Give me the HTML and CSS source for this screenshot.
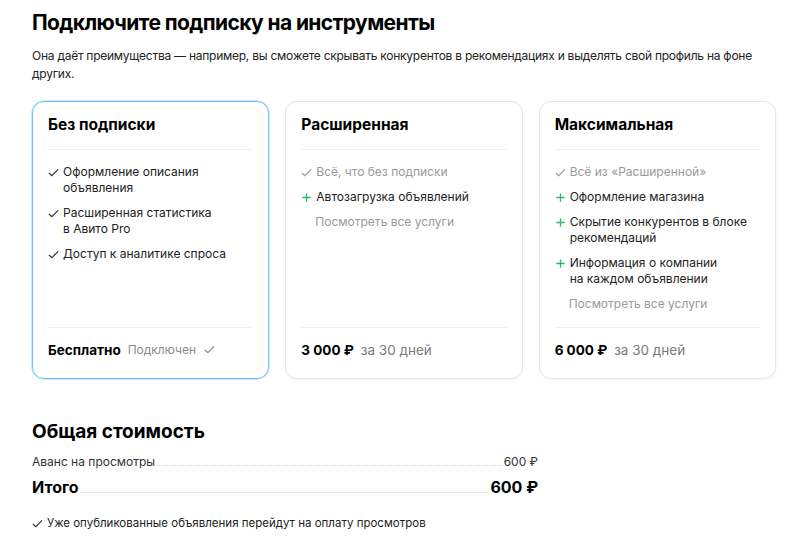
FILE: index.html
```html
<!DOCTYPE html>
<html lang="ru">
<head>
<meta charset="utf-8">
<title>Подписка</title>
<link rel="stylesheet" href="styles.css">
</head>
<body>
<main class="page">
  <h1 class="title">Подключите подписку на инструменты</h1>
  <p class="lead">Она даёт преимущества — например, вы сможете скрывать конкурентов в рекомендациях и выделять свой профиль на фоне других.</p>

  <section class="plans">
    <article class="card card-active">
      <h2 class="card-title">Без подписки</h2>
      <ul class="features">
        <li class="feat"><svg class="ic" viewBox="0 0 12 12"><path d="M1 6.5 L4.2 9.5 L11 2.5" fill="none" stroke="#333" stroke-width="1.3"/></svg><span>Оформление описания<br>объявления</span></li>
        <li class="feat"><svg class="ic" viewBox="0 0 12 12"><path d="M1 6.5 L4.2 9.5 L11 2.5" fill="none" stroke="#333" stroke-width="1.3"/></svg><span>Расширенная статистика<br>в Авито Pro</span></li>
        <li class="feat"><svg class="ic" viewBox="0 0 12 12"><path d="M1 6.5 L4.2 9.5 L11 2.5" fill="none" stroke="#333" stroke-width="1.3"/></svg><span>Доступ к аналитике спроса</span></li>
      </ul>
      <div class="card-foot">
        <span class="price">Бесплатно</span>
        <span class="status">Подключен</span>
        <svg class="ic-status" viewBox="0 0 12 12"><path d="M1 6.5 L4.2 9.5 L11 2.5" fill="none" stroke="#8a8a8a" stroke-width="1.3"/></svg>
      </div>
    </article>

    <article class="card">
      <h2 class="card-title">Расширенная</h2>
      <ul class="features">
        <li class="feat muted"><svg class="ic" viewBox="0 0 12 12"><path d="M1 6.5 L4.2 9.5 L11 2.5" fill="none" stroke="#9a9a9a" stroke-width="1.3"/></svg><span>Всё, что без подписки</span></li>
        <li class="feat"><svg class="ic" viewBox="0 0 12 12"><path d="M6 1.5 V10.5 M1.5 6 H10.5" fill="none" stroke="#2bb86a" stroke-width="1.4"/></svg><span>Автозагрузка объявлений</span></li>
        <li class="feat muted link"><span>Посмотреть все услуги</span></li>
      </ul>
      <div class="card-foot">
        <span class="price">3 000 ₽</span>
        <span class="period">за 30 дней</span>
      </div>
    </article>

    <article class="card">
      <h2 class="card-title">Максимальная</h2>
      <ul class="features">
        <li class="feat muted"><svg class="ic" viewBox="0 0 12 12"><path d="M1 6.5 L4.2 9.5 L11 2.5" fill="none" stroke="#9a9a9a" stroke-width="1.3"/></svg><span>Всё из «Расширенной»</span></li>
        <li class="feat"><svg class="ic" viewBox="0 0 12 12"><path d="M6 1.5 V10.5 M1.5 6 H10.5" fill="none" stroke="#2bb86a" stroke-width="1.4"/></svg><span>Оформление магазина</span></li>
        <li class="feat"><svg class="ic" viewBox="0 0 12 12"><path d="M6 1.5 V10.5 M1.5 6 H10.5" fill="none" stroke="#2bb86a" stroke-width="1.4"/></svg><span>Скрытие конкурентов в блоке<br>рекомендаций</span></li>
        <li class="feat"><svg class="ic" viewBox="0 0 12 12"><path d="M6 1.5 V10.5 M1.5 6 H10.5" fill="none" stroke="#2bb86a" stroke-width="1.4"/></svg><span>Информация о компании<br>на каждом объявлении</span></li>
        <li class="feat muted link"><span>Посмотреть все услуги</span></li>
      </ul>
      <div class="card-foot">
        <span class="price">6 000 ₽</span>
        <span class="period">за 30 дней</span>
      </div>
    </article>
  </section>

  <section class="total">
    <h2 class="total-title">Общая стоимость</h2>
    <div class="row">
      <span class="row-label">Аванс на просмотры</span>
      <span class="dots"></span>
      <span class="row-value">600 ₽</span>
    </div>
    <div class="row row-big">
      <span class="row-label">Итого</span>
      <span class="dots"></span>
      <span class="row-value">600 ₽</span>
    </div>
    <p class="note"><svg class="ic-note" viewBox="0 0 12 12"><path d="M1 6.5 L4.2 9.5 L11 2.5" fill="none" stroke="#333" stroke-width="1.3"/></svg>Уже опубликованные объявления перейдут на оплату просмотров</p>
  </section>
</main>
</body>
</html>
```

FILE: styles.css
```css
* { box-sizing: border-box; }
html, body { margin: 0; padding: 0; background: #fff; }
body {
  font-family: Inter, "Noto Sans", "Liberation Sans", sans-serif;
  color: #1a1a1a;
}
.page {
  width: 800px;
  padding: 9px 24px 0 32px;
}
.title {
  margin: 0;
  font-size: 21px;
  line-height: 28px;
  font-weight: 700;
  letter-spacing: -0.6px;
  color: #000;
}
.lead {
  margin: 10px 0 0;
  font-size: 12px;
  line-height: 18px;
  letter-spacing: -0.25px;
  color: #222;
  max-width: 744px;
}
.plans {
  margin-top: 18px;
  display: grid;
  grid-template-columns: repeat(3, 1fr);
  gap: 16px;
  width: 744px;
}
.card {
  border: 1px solid #e6e6e6;
  border-radius: 12px;
  padding: 12px 15px 0;
  display: flex;
  flex-direction: column;
  box-shadow: 0 1px 3px rgba(0,0,0,0.04);
}
.card-active {
  border-color: #6cc0f7;
  box-shadow: 0 0 0 0.5px #9ed6fb;
}
.card-title {
  margin: 0;
  font-size: 15.5px;
  line-height: 22px;
  font-weight: 700;
  color: #000;
  padding-bottom: 13px;
  border-bottom: 1px solid #f0f0f0;
}
.features {
  list-style: none;
  margin: 0;
  padding: 14px 0 15px;
  flex: 1;
  display: flex;
  flex-direction: column;
  gap: 9px;
  border-bottom: 1px solid #f0f0f0;
}
.feat {
  display: flex;
  align-items: flex-start;
  gap: 4px;
  font-size: 12px;
  line-height: 16px;
  color: #222;
}
.feat.muted { color: #9a9a9a; }
.feat.link { padding-left: 14px; }
.ic {
  width: 11px;
  height: 11px;
  flex: none;
  margin-top: 3px;
}
.card-foot {
  display: flex;
  align-items: center;
  padding: 11px 0 18px;
  height: 50px;
}
.price {
  font-size: 13.5px;
  font-weight: 700;
  color: #000;
  margin-right: 7px;
}
.status {
  font-size: 12px;
  color: #8a8a8a;
  margin-right: 8px;
}
.ic-status {
  width: 11px;
  height: 11px;
}
.period {
  font-size: 13.5px;
  color: #7a7a7a;
}
.total {
  margin-top: 40px;
  width: 506px;
}
.total-title {
  margin: 0;
  font-size: 19px;
  line-height: 26px;
  font-weight: 700;
  color: #000;
}
.row {
  display: flex;
  align-items: baseline;
  font-size: 12px;
  line-height: 18px;
  color: #333;
  margin-top: 8px;
}
.dots {
  flex: 1;
  border-bottom: 1px dotted #cfcfcf;
  margin: 0 2px;
}
.row-big {
  font-size: 16px;
  font-weight: 700;
  color: #000;
  line-height: 22px;
  margin-top: 5px;
}
.note {
  margin: 17px 0 0;
  font-size: 11.5px;
  line-height: 16px;
  color: #222;
  display: flex;
  align-items: center;
  gap: 4px;
}
.ic-note { width: 11px; height: 11px; }
```
